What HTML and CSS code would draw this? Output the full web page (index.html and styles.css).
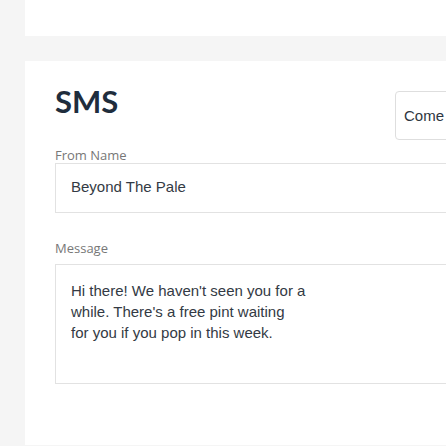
FILE: index.html
```html
<!DOCTYPE html>
<html>
<head>
<meta charset="utf-8">
<link rel="stylesheet" href="styles.css">
</head>
<body>
<div class="page">
  <aside class="rail"></aside>
  <main class="main">
    <div class="topbar"></div>
    <section class="card">
      <div class="card-head">
        <h1 class="title">SMS</h1>
        <button class="template-btn">Come back offer</button>
      </div>
      <label class="label label-from">From Name</label>
      <div class="field">Beyond The Pale</div>
      <label class="label label-msg">Message</label>
      <div class="field field-msg"><div class="msg-text">Hi there! We haven't seen you for a<br>while. There's a free pint waiting<br>for you if you pop in this week.</div></div>
    </section>
  </main>
</div>
</body>
</html>
```

FILE: styles.css
```css
html, body {
  margin: 0;
  padding: 0;
  background: #f5f5f5;
  width: 446px;
  height: 446px;
  overflow: hidden;
}
.page {
  display: flex;
  width: 900px;
}
.rail {
  width: 25px;
  flex: none;
}
.main {
  flex: 1;
  display: flex;
  flex-direction: column;
  gap: 25px;
}
.topbar {
  height: 36px;
  background: #ffffff;
}
.card {
  background: #ffffff;
  padding: 22px 30px 61px 30px;
  display: flex;
  flex-direction: column;
}
.card-head {
  display: grid;
  grid-template-columns: 340px auto;
  align-items: start;
}
.title {
  margin: 0;
  font-family: Lato, "Open Sans", sans-serif;
  font-weight: 700;
  font-size: 31px;
  line-height: 37px;
  color: #1f2d3d;
}
.template-btn {
  justify-self: start;
  margin-top: 7.5px;
  height: 49px;
  padding: 0 8px;
  border: 1px solid #dedede;
  border-radius: 4px;
  background: #ffffff;
  font-family: "Liberation Sans", Arial, sans-serif;
  font-size: 15px;
  line-height: 21px;
  color: #2d3640;
  white-space: nowrap;
}
.label {
  display: block;
  font-family: "Open Sans", sans-serif;
  font-size: 13px;
  line-height: 16px;
  color: #777777;
}
.label-from {
  margin-top: 7px;
}
.label-msg {
  margin-top: 27px;
  margin-bottom: 8px;
}
.field {
  border: 1px solid #e2e2e2;
  padding: 12px 15px 15px 15px;
  font-family: "Liberation Sans", Arial, sans-serif;
  font-size: 15px;
  line-height: 21px;
  color: #333a44;
}
.field-msg {
  box-sizing: border-box;
  height: 120px;
  padding-top: 15px;
}
.msg-text {
  white-space: nowrap;
}
```
